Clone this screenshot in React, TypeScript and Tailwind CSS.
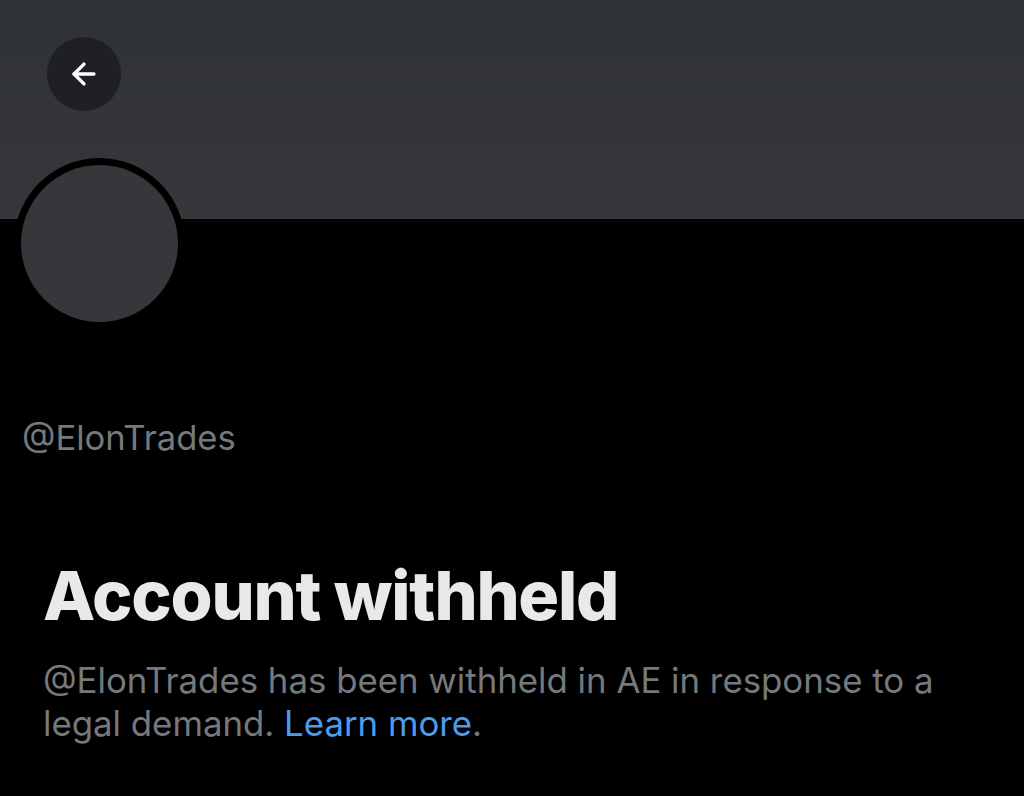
import { ArrowLeft } from "lucide-react";

export default function App() {
  return (
    <div className="flex h-[796px] w-[1024px] flex-col overflow-hidden bg-black font-['Inter',sans-serif]">
      <div className="h-[219px] shrink-0 bg-gradient-to-b from-[#2f3236] to-[#36373a] pt-[37px] pl-[47px]">
        <button className="flex h-[74px] w-[74px] items-center justify-center rounded-full bg-[#1e2023]">
          <ArrowLeft className="h-[34px] w-[34px] text-white" strokeWidth={2.4} />
        </button>
      </div>
      <div className="relative px-[22px]">
        <div className="-mt-[61px] ml-[-8px] h-[171px] w-[171px] rounded-full bg-black p-[7px]">
          <div className="h-full w-full rounded-full bg-[#36373a]" />
        </div>
        <p className="mt-[88px] text-[34.6px] leading-[40px] text-[#75797d]">@ElonTrades</p>
      </div>
      <div className="mt-[98px] px-[43px]">
        <h1 className="text-[68px] leading-[80px] font-extrabold tracking-[-1.2px] text-[#e7e9ea]">Account withheld</h1>
        <p className="mt-[24px] w-[940px] text-[34.8px] leading-[43px] text-[#75797d]">
          @ElonTrades has been withheld in AE in response to a legal demand.{" "}
          <span className="text-[#4b9ceb]">Learn more</span>.
        </p>
      </div>
    </div>
  );
}
